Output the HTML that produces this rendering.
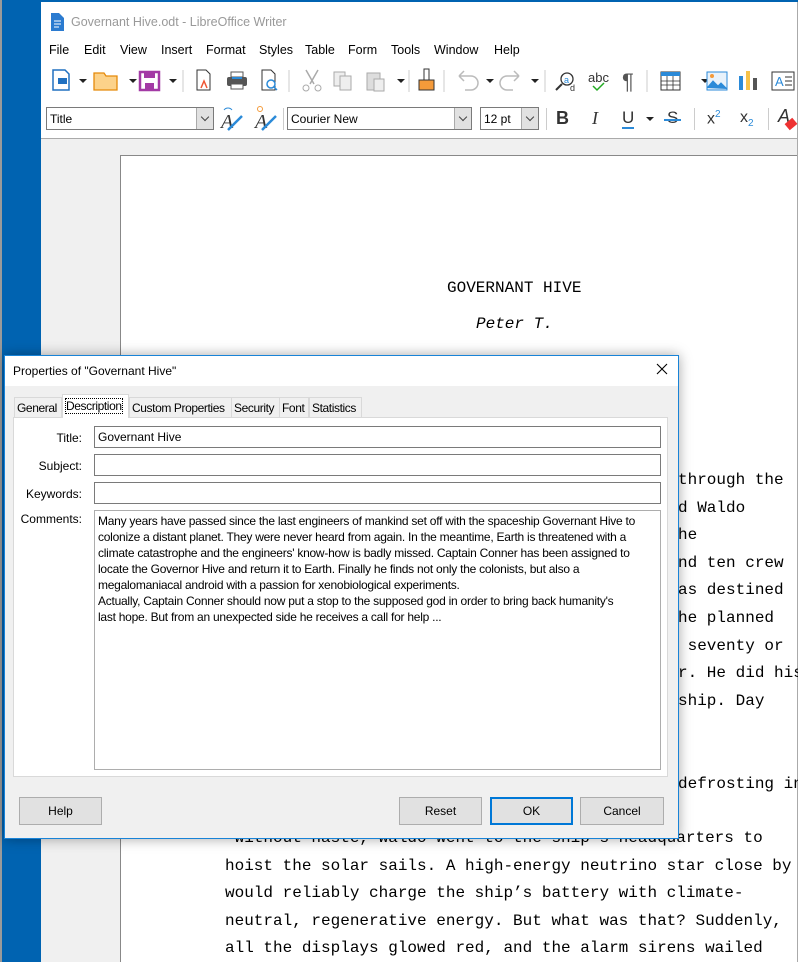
<!DOCTYPE html>
<html><head><meta charset="utf-8"><style>
*{margin:0;padding:0;box-sizing:border-box}
body{width:798px;height:962px;overflow:hidden;background:#fff;font-family:"Liberation Sans",sans-serif;font-size:12px;color:#000;position:relative}
.a{position:absolute}
.mono{font-family:"Liberation Mono",monospace;font-size:16px;white-space:nowrap;color:#000}
.combo{position:absolute;background:#fff;border:1px solid #7a7a7a;height:23px;font-size:12px;padding:4px 3px}
.combo i{position:absolute;right:0;top:0;width:17px;height:21px;background:#e1e1e1;border-left:1px solid #aaa}
.combo i:after{content:"";position:absolute;left:5px;top:6px;width:5px;height:5px;border-right:1px solid #444;border-bottom:1px solid #444;transform:rotate(45deg)}
.btn{position:absolute;background:#e1e1e1;border:1px solid #adadad;height:28px;text-align:center;line-height:26px;font-size:12px}
.inp{position:absolute;left:94px;width:567px;height:22px;background:#fff;border:1px solid #7a7a7a;padding:3px 3px;font-size:12px}
.lbl{position:absolute;right:716px;font-size:12px;text-align:right;width:80px}
.tab{position:absolute;top:397px;height:20px;border:1px solid #d9d9d9;border-bottom:none;background:#f0f0f0;padding:3px 2px;font-size:12px;white-space:nowrap;letter-spacing:-0.4px;overflow:hidden}
</style></head><body>
<div class="a" style="left:0;top:0;width:2px;height:962px;background:#9a9a9a"></div>
<div class="a" style="left:2px;top:0;width:39px;height:962px;background:#0063b1"></div>
<div class="a" style="left:41px;top:0;width:757px;height:962px;background:#fff;border-right:1px solid #aaa"></div>
<div class="a" style="left:41px;top:0;width:757px;height:2px;background:#0063b1"></div>
<svg class="a" style="left:50px;top:13px" width="14" height="18"><path d="M1 0h8l5 5v13H1z" fill="#2b7bd0"/><path d="M4 8h7M4 11h7M4 14h5" stroke="#fff"/></svg>
<div class="a" style="left:71px;top:15px;color:#999;font-size:12.5px">Governant Hive.odt - LibreOffice Writer</div>
<div class="a" style="left:49px;top:43px;font-size:12.5px">
<span style="position:absolute;left:0">File</span><span style="position:absolute;left:35px">Edit</span><span style="position:absolute;left:71px">View</span><span style="position:absolute;left:112px">Insert</span><span style="position:absolute;left:157px">Format</span><span style="position:absolute;left:210px">Styles</span><span style="position:absolute;left:256px">Table</span><span style="position:absolute;left:299px">Form</span><span style="position:absolute;left:342px">Tools</span><span style="position:absolute;left:385px">Window</span><span style="position:absolute;left:445px">Help</span></div>
<svg class="a" style="left:41px;top:64px" width="757" height="34">
<path d="M12 6h12l4 4v16H12z" fill="#fff" stroke="#2070c0" stroke-width="1.5"/><rect x="17" y="14" width="9" height="6" fill="#2070c0"/>
<path d="M38 15l4 4 4-4z M88 15l4 4 4-4z M128 15l4 4 4-4z M356 15l4 4 4-4z M445 15l4 4 4-4z M490 15l4 4 4-4z M660 15l4 4 4-4z" fill="#222"/>
<path d="M53 9h10l2 3h11v14H53z" fill="#fcd28a" stroke="#e58a0a" stroke-width="1.3"/>
<rect x="99" y="8" width="19" height="18" fill="#fff" stroke="#a33aa5" stroke-width="2.5"/><rect x="103" y="8" width="11" height="6" fill="#a33aa5"/><rect x="104" y="19" width="9" height="7" fill="#a33aa5"/>
<line x1="142" y1="6" x2="142" y2="28" stroke="#ccc"/>
<path d="M156 6h9l4 4v16h-13z" fill="#fff" stroke="#333"/><path d="M160 24l3-7 3 7" stroke="#e53" fill="none" stroke-width="1.5"/>
<rect x="186" y="13" width="20" height="9" rx="2" fill="#555"/><rect x="190" y="8" width="12" height="5" fill="#fff" stroke="#555"/><rect x="190" y="20" width="12" height="5" fill="#fff" stroke="#555"/><rect x="191" y="13" width="10" height="2" fill="#2b8ad8"/>
<path d="M221 6h9l4 4v16h-13z" fill="#fff" stroke="#333"/><circle cx="230" cy="20" r="4" fill="#fff" stroke="#2b8ad8" stroke-width="1.5"/><path d="M233 23l3 3" stroke="#2b8ad8" stroke-width="1.5"/>
<line x1="248" y1="6" x2="248" y2="28" stroke="#ccc"/>
<path d="M265 6l8 14M277 6l-8 14" stroke="#aaa" stroke-width="1.5"/><circle cx="265" cy="24" r="3" fill="none" stroke="#aaa"/><circle cx="277" cy="24" r="3" fill="none" stroke="#aaa"/>
<rect x="293" y="8" width="11" height="14" fill="#eee" stroke="#aaa"/><rect x="299" y="12" width="11" height="14" fill="#eee" stroke="#aaa"/>
<rect x="326" y="9" width="13" height="17" fill="#ddd" stroke="#aaa"/><rect x="333" y="15" width="10" height="12" fill="#eee" stroke="#aaa"/>
<line x1="368" y1="6" x2="368" y2="28" stroke="#ccc"/>
<rect x="383" y="5" width="5" height="11" fill="#fff" stroke="#333"/><path d="M378 16h15v10h-15z" fill="#f49a3a" stroke="#333"/>
<line x1="403" y1="6" x2="403" y2="28" stroke="#ccc"/>
<path d="M418 12h12a7 7 0 010 14h-6M418 12l5-5M418 12l5 5" stroke="#bbb" fill="none" stroke-width="1.5"/>
<path d="M478 12h-12a7 7 0 000 14h6M478 12l-5-5M478 12l-5 5" stroke="#bbb" fill="none" stroke-width="1.5"/>
<line x1="504" y1="6" x2="504" y2="28" stroke="#ccc"/>
<circle cx="526" cy="15" r="6" fill="none" stroke="#333" stroke-width="1.3"/><path d="M521 20l-6 6" stroke="#333" stroke-width="2"/><text x="523" y="19" font-size="9" fill="#2b8ad8" font-family="Liberation Sans">a</text><text x="529" y="27" font-size="9" fill="#333" font-family="Liberation Sans">d</text>
<text x="547" y="18" font-size="13" fill="#333" font-family="Liberation Sans">abc</text><path d="M552 22l4 4 7-7" stroke="#2a2" fill="none" stroke-width="1.5"/>
<text x="581" y="25" font-size="22" fill="#555" font-family="Liberation Sans">¶</text>
<line x1="606" y1="6" x2="606" y2="28" stroke="#ccc"/>
<rect x="620" y="8" width="19" height="18" fill="#fff" stroke="#333"/><rect x="620" y="8" width="19" height="4" fill="#2b8ad8"/><path d="M620 17h19M620 21h19M626 12v14M632 12v14" stroke="#333" stroke-width=".8"/>
<rect x="666" y="8" width="20" height="18" fill="#e8f2fb" stroke="#2b8ad8"/><path d="M666 24l6-7 5 5 3-3 6 6" fill="#2b8ad8" stroke="#2b8ad8"/><circle cx="671" cy="12" r="2" fill="#f49a3a"/>
<rect x="698" y="12" width="4" height="14" fill="#2b8ad8"/><rect x="705" y="7" width="4" height="19" fill="#f6c24a"/><rect x="712" y="14" width="4" height="12" fill="#555"/>
<rect x="731" y="8" width="22" height="18" fill="#fff" stroke="#333"/><text x="734" y="22" font-size="13" fill="#2b8ad8" font-family="Liberation Sans">A</text><path d="M744 13h7M744 17h7M744 21h7" stroke="#333"/>
</svg>
<div class="combo" style="left:46px;top:107px;width:168px">Title<i></i></div>
<svg class="a" style="left:216px;top:104px" width="70" height="30">
<text x="5" y="24" font-size="20" font-style="italic" fill="#333" font-family="Liberation Serif">A</text><path d="M12 26l14-14" stroke="#2b8ad8" stroke-width="2.5"/><path d="M8 6a5 5 0 018 0" stroke="#2b8ad8" fill="none"/>
<text x="39" y="24" font-size="20" font-style="italic" fill="#333" font-family="Liberation Serif">A</text><path d="M46 26l14-14" stroke="#2b8ad8" stroke-width="2.5"/><circle cx="44" cy="5" r="2.5" fill="none" stroke="#f49a3a"/>
</svg>
<div class="a" style="left:283px;top:108px;width:1px;height:22px;background:#ccc"></div>
<div class="combo" style="left:287px;top:107px;width:185px">Courier New<i></i></div>
<div class="combo" style="left:480px;top:107px;width:59px">12 pt<i></i></div>
<div class="a" style="left:546px;top:108px;width:1px;height:22px;background:#ccc"></div>
<div class="a" style="left:556px;top:108px;font-size:18px;font-weight:bold;color:#333">B</div>
<div class="a" style="left:592px;top:108px;font-size:18px;font-style:italic;color:#333;font-family:'Liberation Serif',serif">I</div>
<div class="a" style="left:622px;top:108px;font-size:17px;color:#333;border-bottom:2px solid #2b8ad8;line-height:19px">U</div>
<svg class="a" style="left:645px;top:115px" width="10" height="8"><path d="M1 2l4 4 4-4z" fill="#222"/></svg>
<div class="a" style="left:667px;top:108px;font-size:17px;color:#333">S</div><div class="a" style="left:664px;top:119px;width:17px;height:1.5px;background:#2b8ad8"></div>
<div class="a" style="left:694px;top:108px;width:1px;height:22px;background:#ccc"></div>
<div class="a" style="left:707px;top:109px;font-size:16px;color:#333">x<sup style="font-size:10px;color:#2b8ad8">2</sup></div>
<div class="a" style="left:740px;top:109px;font-size:16px;color:#333">x<sub style="font-size:10px;color:#2b8ad8">2</sub></div>
<div class="a" style="left:768px;top:108px;width:1px;height:22px;background:#ccc"></div>
<div class="a" style="left:778px;top:106px;font-size:18px;font-style:italic;color:#333">A</div><div class="a" style="left:786px;top:120px;width:10px;height:8px;background:#e33;transform:rotate(-40deg)"></div>
<div class="a" style="left:41px;top:138px;width:756px;height:824px;background:#f0f0f0;border-top:1px solid #aaa"></div>
<div class="a" style="left:120px;top:155px;width:677px;height:807px;background:#fff;border-left:1px solid #888;border-top:1px solid #888"></div>
<div class="a mono" style="left:447px;top:279px">GOVERNANT HIVE</div>
<div class="a mono" style="left:476px;top:315px;font-style:italic">Peter T.</div>
<div class="a mono" style="left:678px;top:467px;line-height:27.6px">through the<br>d Waldo<br>he<br>nd ten crew<br>as destined<br>he planned<br>&nbsp;seventy or<br>r. He did his<br>ship. Day<br><br><br>defrosting in</div>
<div class="a mono" style="left:225px;top:825px;line-height:27.6px">&nbsp;Without haste, Waldo went to the ship's headquarters to<br>hoist the solar sails. A high-energy neutrino star close by<br>would reliably charge the ship’s battery with climate-<br>neutral, regenerative energy. But what was that? Suddenly,<br>all the displays glowed red, and the alarm sirens wailed</div>
<div class="a" style="left:4px;top:355px;width:675px;height:484px;background:#f0f0f0;border:1px solid #1883d7;box-shadow:0 0 12px rgba(0,0,0,.35)"></div>
<div class="a" style="left:5px;top:356px;width:673px;height:30px;background:#fff"></div>
<div class="a" style="left:13px;top:364px;font-size:12px">Properties of "Governant Hive"</div>
<svg class="a" style="left:656px;top:363px" width="12" height="12"><path d="M1 1l10 10M11 1L1 11" stroke="#000" stroke-width="1.1"/></svg>
<div class="a" style="left:13px;top:417px;width:655px;height:360px;background:#fff;border:1px solid #d9d9d9"></div>
<div class="tab" style="left:14px;width:48px">General</div>
<div class="tab" style="left:62px;top:394px;height:24px;width:67px;background:#fff;padding-top:4px"><span style="border:1px dotted #000">Description</span></div>
<div class="tab" style="left:129px;width:103px">Custom Properties</div>
<div class="tab" style="left:231px;width:49px">Security</div>
<div class="tab" style="left:279px;width:30px">Font</div>
<div class="tab" style="left:309px;width:53px">Statistics</div>
<div class="lbl" style="top:431px">Title:</div>
<div class="lbl" style="top:459px">Subject:</div>
<div class="lbl" style="top:487px">Keywords:</div>
<div class="lbl" style="top:512px">Comments:</div>
<div class="inp" style="top:426px">Governant Hive</div>
<div class="inp" style="top:454px"></div>
<div class="inp" style="top:482px"></div>
<div class="inp" style="top:510px;height:260px;border-color:#adadad;line-height:16px;white-space:nowrap;letter-spacing:-0.25px;font-size:12px;padding:2px 3px">Many years have passed since the last engineers of mankind set off with the spaceship Governant Hive to<br>colonize a distant planet. They were never heard from again. In the meantime, Earth is threatened with a<br>climate catastrophe and the engineers' know-how is badly missed. Captain Conner has been assigned to<br>locate the Governor Hive and return it to Earth. Finally he finds not only the colonists, but also a<br>megalomaniacal android with a passion for xenobiological experiments.<br>Actually, Captain Conner should now put a stop to the supposed god in order to bring back humanity's<br>last hope. But from an unexpected side he receives a call for help ...</div>
<div class="btn" style="left:19px;top:797px;width:83px">Help</div>
<div class="btn" style="left:399px;top:797px;width:83px">Reset</div>
<div class="btn" style="left:490px;top:797px;width:83px;border:2px solid #0078d7;line-height:24px">OK</div>
<div class="btn" style="left:580px;top:797px;width:84px">Cancel</div>
</body></html>
